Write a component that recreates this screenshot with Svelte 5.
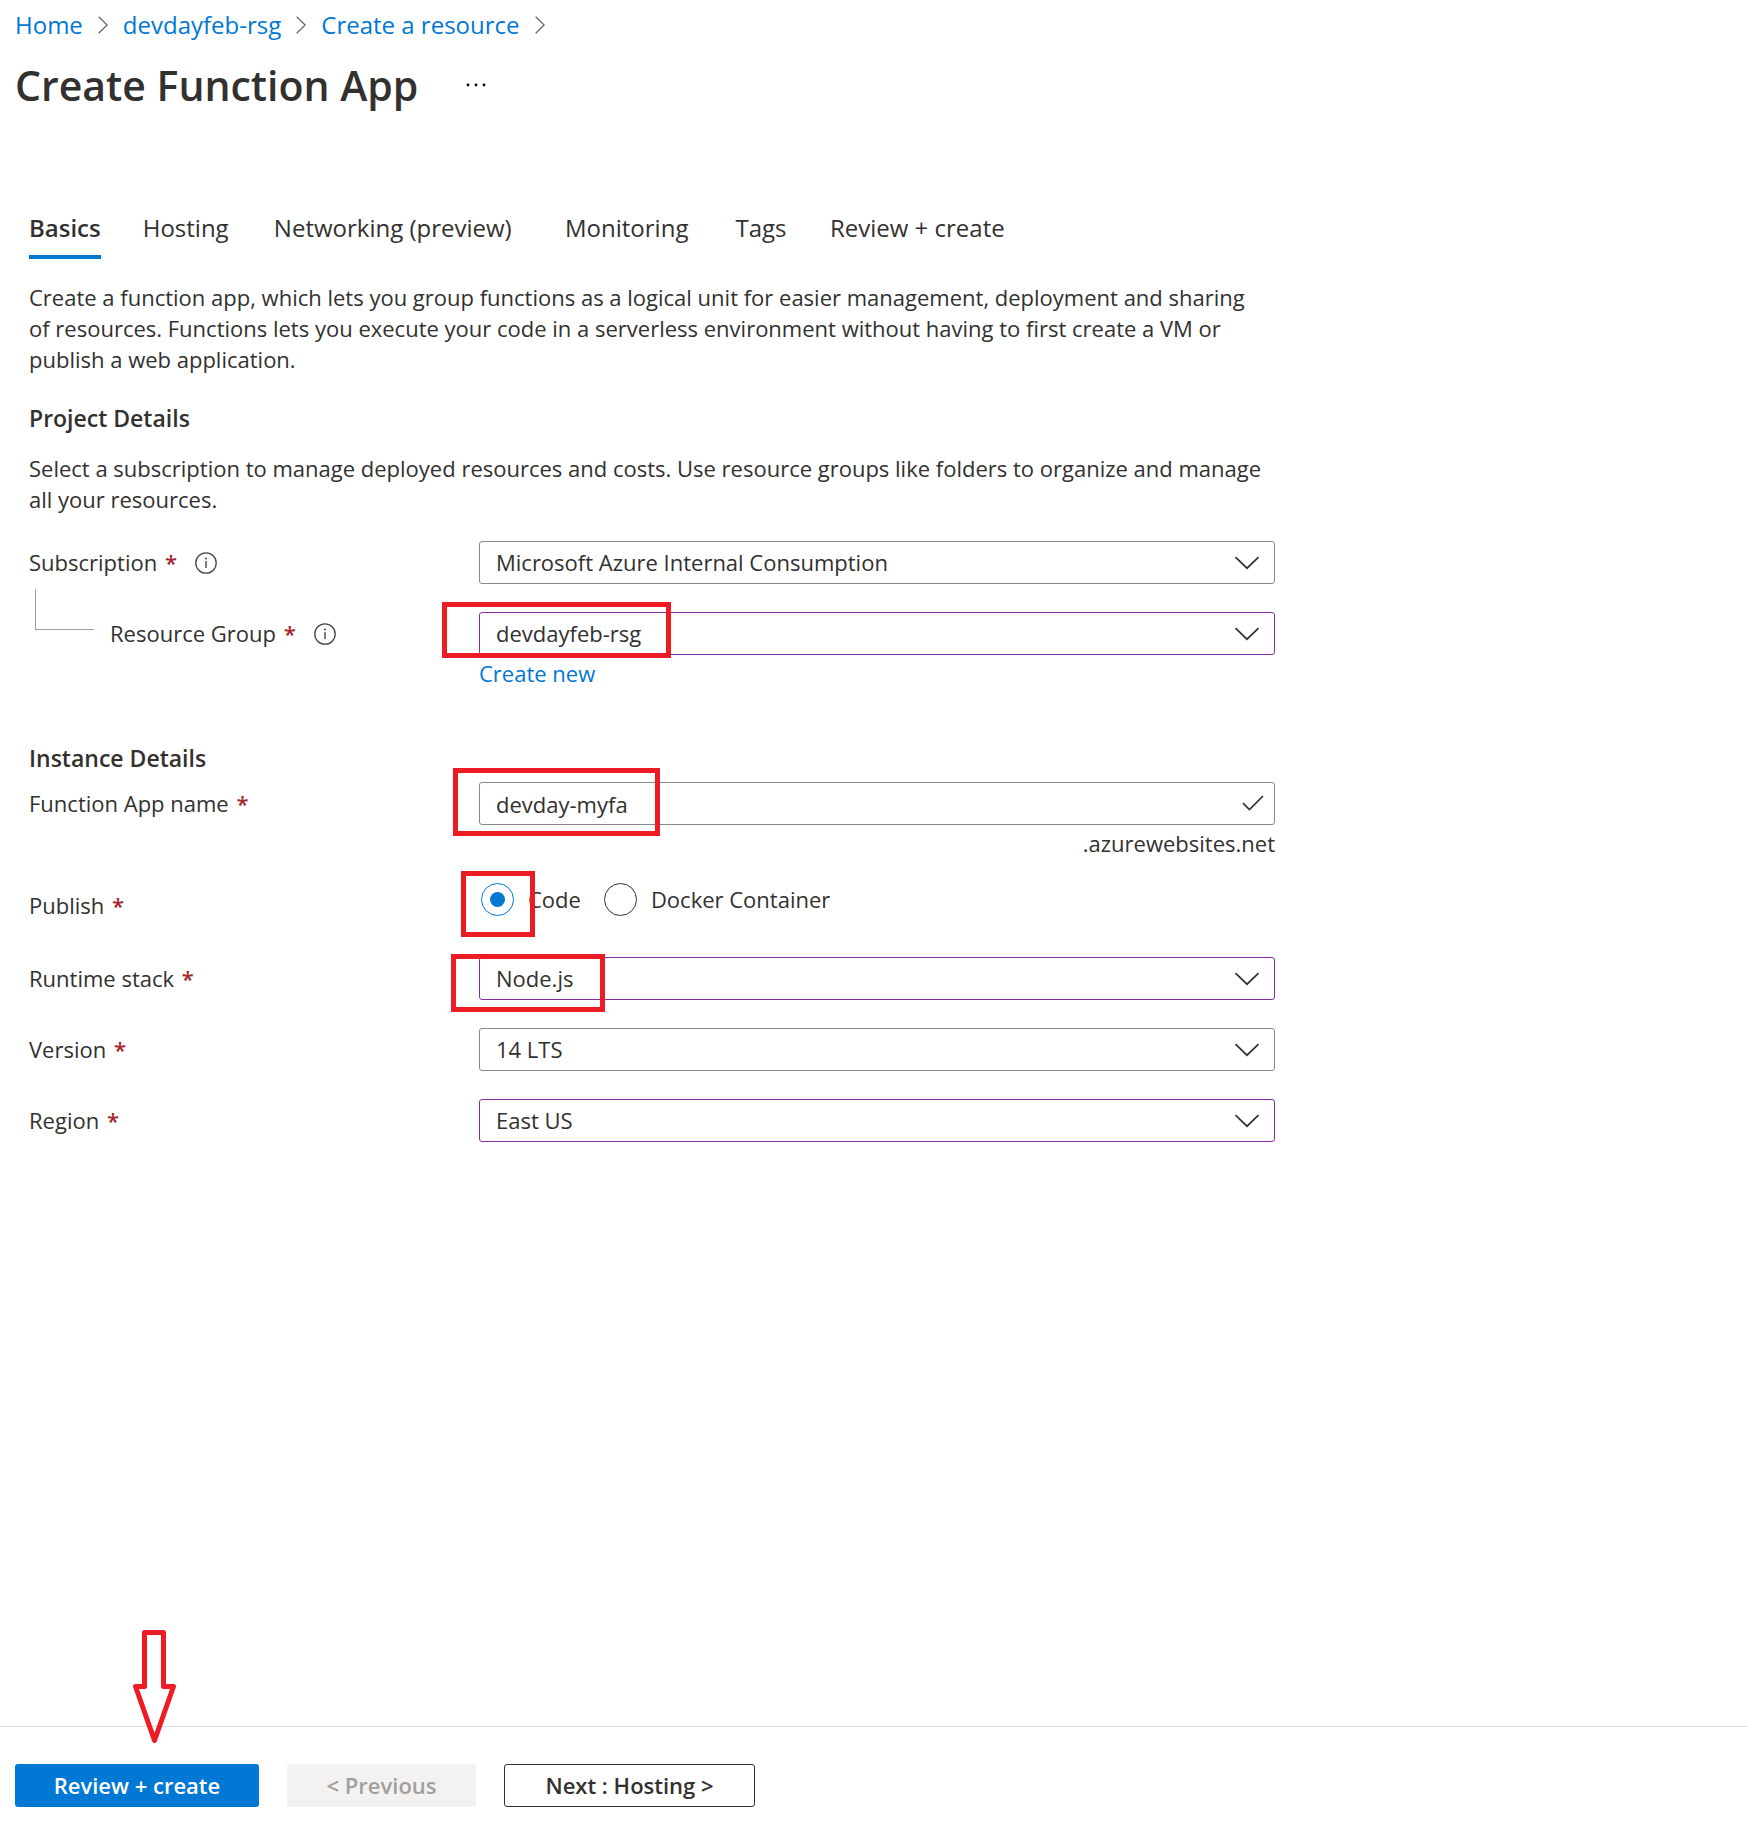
<script>
  const crumbs = ['Home', 'devdayfeb-rsg', 'Create a resource'];
  const tabs = ['Basics', 'Hosting', 'Networking (preview)', 'Monitoring', 'Tags', 'Review + create'];
  let active = $state('Basics');
  let appName = $state('devday-myfa');
  let publish = $state('code');
</script>

{#snippet info(name)}
  <button type="button" class="info" aria-label="About {name}">
    <svg width="22" height="22" viewBox="0 0 22 22" aria-hidden="true">
      <circle cx="11" cy="11" r="10.2" fill="none" stroke="currentColor" stroke-width="1.3" />
      <circle cx="11" cy="6.4" r="1" fill="currentColor" />
      <path d="M11 9v7" stroke="currentColor" stroke-width="1.4" />
    </svg>
  </button>
{/snippet}

{#snippet dropdown(id, value, edited)}
  <select {id} class="box" class:edited>
    <option>{value}</option>
  </select>
  <svg class="chevron" width="26" height="14" viewBox="0 0 26 14" aria-hidden="true">
    <path d="M1.5 1.2 13 12.2 24.5 1.2" fill="none" stroke="currentColor" stroke-width="1.7" />
  </svg>
{/snippet}

<div class="page">
  <header>
    <nav class="crumbs" aria-label="Breadcrumb">
      {#each crumbs as crumb}
        <a href="#top">{crumb}</a>
        <svg width="10" height="18" viewBox="0 0 10 18" aria-hidden="true">
          <path d="M.7.7 9.2 9 .7 17.3" fill="none" stroke="currentColor" stroke-width="1.2" />
        </svg>
      {/each}
    </nav>
    <div class="title">
      <h1>Create Function App</h1>
      <button type="button" class="more" aria-label="More actions">
        <svg width="20" height="4" viewBox="0 0 20 4" aria-hidden="true">
          <circle cx="2" cy="2" r="1.4" /><circle cx="10" cy="2" r="1.4" /><circle cx="18" cy="2" r="1.4" />
        </svg>
      </button>
    </div>
  </header>

  <main>
    <div class="tabs" role="tablist">
      {#each tabs as tab}
        <button
          type="button"
          role="tab"
          class="tab"
          data-label={tab}
          aria-selected={active === tab}
          onclick={() => (active = tab)}>{tab}</button>
      {/each}
    </div>

    <p class="intro">
      Create a function app, which lets you group functions as a logical unit for easier management, deployment and sharing
      of resources. Functions lets you execute your code in a serverless environment without having to first create a VM or
      publish a web application.
    </p>

    <h2>Project Details</h2>
    <p class="about">
      Select a subscription to manage deployed resources and costs. Use resource groups like folders to organize and manage
      all your resources.
    </p>

    <div class="row">
      <div class="label">
        <label for="subscription">Subscription <b>*</b></label>
        {@render info('Subscription')}
      </div>
      <div class="control">{@render dropdown('subscription', 'Microsoft Azure Internal Consumption', false)}</div>
    </div>

    <div class="row">
      <div class="label nested">
        <span class="elbow"></span>
        <label for="group">Resource Group <b>*</b></label>
        {@render info('Resource Group')}
      </div>
      <div class="control">
        {@render dropdown('group', 'devdayfeb-rsg', true)}
        <span class="mark mark-group"></span>
      </div>
    </div>
    <div class="row note">
      <a class="create" href="#new">Create new</a>
    </div>

    <h2 class="instance">Instance Details</h2>

    <div class="row first">
      <div class="label"><label for="name">Function App name <b>*</b></label></div>
      <div class="control">
        <input id="name" class="box" type="text" bind:value={appName} />
        <svg class="tick" width="22" height="16" viewBox="0 0 22 16" aria-hidden="true">
          <path d="M1 8.2 7.5 14.5 21 1" fill="none" stroke="currentColor" stroke-width="1.7" />
        </svg>
        <span class="mark mark-name"></span>
      </div>
    </div>
    <div class="row note">
      <span class="suffix">.azurewebsites.net</span>
    </div>

    <div class="row publish">
      <div class="label" id="publish-label"><span>Publish <b>*</b></span></div>
      <div class="control radios" role="radiogroup" aria-labelledby="publish-label">
        <label><input type="radio" name="publish" value="code" bind:group={publish} />Code</label>
        <label><input type="radio" name="publish" value="docker" bind:group={publish} />Docker Container</label>
        <span class="mark mark-code"></span>
      </div>
    </div>

    <div class="row runtime">
      <div class="label"><label for="runtime">Runtime stack <b>*</b></label></div>
      <div class="control">
        {@render dropdown('runtime', 'Node.js', true)}
        <span class="mark mark-runtime"></span>
      </div>
    </div>

    <div class="row">
      <div class="label"><label for="version">Version <b>*</b></label></div>
      <div class="control">{@render dropdown('version', '14 LTS', false)}</div>
    </div>

    <div class="row">
      <div class="label"><label for="region">Region <b>*</b></label></div>
      <div class="control">{@render dropdown('region', 'East US', true)}</div>
    </div>
  </main>

  <footer>
    <button type="button" class="primary">Review + create</button>
    <button type="button" class="previous" disabled>&lt; Previous</button>
    <button type="button" class="next">Next : Hosting &gt;</button>
    <svg class="arrow" width="44" height="114" viewBox="0 0 44 114" aria-hidden="true">
      <path
        d="M11.5 2.5H30.5V56.5H40.5L21.5 110.5 2.5 56.5H11.5Z"
        fill="none"
        stroke="currentColor"
        stroke-width="5"
        stroke-linejoin="round" />
    </svg>
  </footer>
</div>

<style>
  :global(body) {
    margin: 0;
    background: #fff;
  }

  .page {
    display: flex;
    flex-direction: column;
    min-height: 100vh;
    box-sizing: border-box;
    font-family: 'Open Sans', 'Noto Sans', sans-serif;
    font-size: 22px;
    line-height: 31px;
    color: #323130;
  }

  .page * {
    box-sizing: border-box;
  }

  button,
  input,
  select {
    margin: 0;
    padding: 0;
    border: 0;
    background: none;
    font: inherit;
    color: inherit;
  }

  a {
    color: #0078d4;
    text-decoration: none;
  }

  svg {
    display: block;
    flex: none;
  }

  h1,
  h2,
  p {
    margin: 0;
  }

  p {
    padding-right: 12px;
  }

  header {
    padding: 8px 15px 0;
  }

  .crumbs {
    display: flex;
    flex-wrap: wrap;
    align-items: center;
    gap: 15px;
    font-size: 24px;
    line-height: 34px;
    color: #605e5c;
  }

  .title {
    display: flex;
    align-items: center;
    gap: 48px;
    margin-top: 15px;
  }

  h1 {
    font-size: 41px;
    line-height: 56px;
    font-weight: 600;
  }

  main {
    max-width: 1304px;
    margin-top: 98px;
    padding: 0 29px 40px;
  }

  .tabs {
    display: flex;
    flex-wrap: wrap;
    gap: 42px;
  }

  .tab {
    padding-bottom: 10px;
    border-bottom: 4px solid transparent;
    font-size: 24px;
    line-height: 34px;
    text-align: left;
  }

  .tab::after {
    content: attr(data-label);
    display: block;
    height: 0;
    overflow: hidden;
    visibility: hidden;
    font-weight: 600;
  }

  .tab[aria-selected='true'] {
    border-color: #0078d4;
    font-weight: 600;
  }

  .intro {
    margin-top: 23px;
  }

  h2 {
    margin-top: 28px;
    font-size: 23px;
    line-height: 31px;
    font-weight: 600;
  }

  .about {
    margin: 19px 0 26px;
  }

  .row {
    display: grid;
    grid-template-columns: 450px minmax(0, 1fr);
    align-items: center;
  }

  .row + .row {
    margin-top: 28px;
  }

  .row + .note {
    margin-top: 3px;
  }

  .note > * {
    grid-column: 2;
  }

  .suffix {
    text-align: right;
  }

  h2.instance {
    margin-top: 54px;
  }

  .first {
    margin-top: 8px;
  }

  .row + .publish {
    margin-top: 19px;
  }

  .publish .label {
    padding-top: 12px;
  }

  .row + .runtime {
    margin-top: 36px;
  }

  .label {
    display: flex;
    align-items: center;
    gap: 18px;
  }

  .label b {
    margin-left: 2px;
    font-weight: 600;
    color: #a4262c;
  }

  .nested {
    position: relative;
    padding-left: 81px;
  }

  .elbow {
    position: absolute;
    left: 6px;
    bottom: 19px;
    width: 59px;
    height: 41px;
    border: solid #a19f9d;
    border-width: 0 0 1px 1px;
  }

  .info {
    color: #484644;
  }

  .control {
    position: relative;
  }

  .box {
    display: block;
    width: 100%;
    height: 43px;
    padding: 0 52px 0 16px;
    border: 1px solid #8a8886;
    border-radius: 3px;
    background: #fff;
    appearance: none;
  }

  .edited {
    border-color: #8a2da5;
  }

  .chevron {
    position: absolute;
    top: 15px;
    right: 15px;
    pointer-events: none;
  }

  .tick {
    position: absolute;
    top: 13px;
    right: 11px;
  }

  .radios {
    display: flex;
    align-items: center;
    gap: 23px;
    height: 43px;
    padding-left: 2px;
  }

  .radios label {
    display: flex;
    align-items: center;
    gap: 14px;
  }

  .radios input {
    display: grid;
    place-items: center;
    width: 33px;
    height: 33px;
    border: 1px solid #323130;
    border-radius: 50%;
    appearance: none;
  }

  .radios input:checked {
    border-color: #0078d4;
  }

  .radios input:checked::before {
    content: '';
    width: 15px;
    height: 15px;
    border-radius: 50%;
    background: #0078d4;
  }

  .mark {
    position: absolute;
    border: 5px solid #ed1c24;
    pointer-events: none;
  }

  .mark-group {
    left: -37px;
    top: -10px;
    width: 229px;
    height: 56px;
  }

  .mark-name {
    left: -26px;
    top: -14px;
    width: 207px;
    height: 68px;
  }

  .mark-code {
    left: -18px;
    top: -7px;
    width: 74px;
    height: 66px;
  }

  .mark-runtime {
    left: -28px;
    top: -3px;
    width: 154px;
    height: 58px;
  }

  footer {
    position: relative;
    display: flex;
    flex-wrap: wrap;
    gap: 28px;
    margin-top: auto;
    padding: 37px 15px 27px;
    border-top: 1px solid #dcdcdc;
  }

  footer button {
    height: 43px;
    border-radius: 3px;
    font-weight: 600;
  }

  .primary {
    width: 244px;
    background: #0078d4;
    color: #fff;
  }

  .previous {
    width: 189px;
    background: #f3f2f1;
    color: #a19f9d;
  }

  .next {
    width: 251px;
    border: 1px solid #323130;
  }

  .arrow {
    position: absolute;
    left: 133px;
    top: -97px;
    color: #ed1c24;
    pointer-events: none;
  }
</style>
